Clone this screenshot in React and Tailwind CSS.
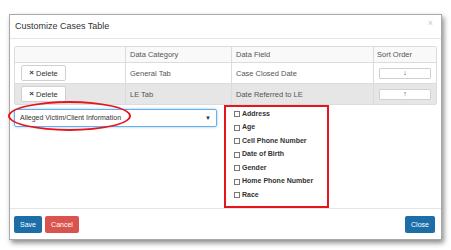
import { useState } from "react";

const rows = [
  { category: "General Tab", field: "Case Closed Date", arrow: "↓", shade: false },
  { category: "LE Tab", field: "Date Referred to LE", arrow: "↑", shade: true },
];

const fields = [
  "Address",
  "Age",
  "Cell Phone Number",
  "Date of Birth",
  "Gender",
  "Home Phone Number",
  "Race",
];

export default function App() {
  const [section, setSection] = useState("Alleged Victim/Client Information");

  return (
    <div
      className="w-[451px] h-[250px] bg-white overflow-hidden pt-[14px] pl-[9px]"
      style={{ fontFamily: '"Liberation Sans", Arial, sans-serif' }}
    >
      <div className="w-[433px] h-[226px] border border-[#a9a9a9] bg-white shadow-[2px_3px_5px_rgba(0,0,0,0.45)] flex flex-col">
        {/* header */}
        <div className="h-[25px] border-b border-[#e5e5e5] flex items-center justify-between pl-[5px] pr-[8px]">
          <span className="text-[9px] text-[#333]">Customize Cases Table</span>
          <span className="text-[9px] text-[#c8c8c8] -mt-[5px]">×</span>
        </div>

        {/* body */}
        <div className="flex-1 pt-[7px] pl-[4px] pr-[6px] flex flex-col">
          <table className="w-[421px] border-separate border-spacing-0 border border-[#dcdcdc] rounded-[2px] text-[7.5px] text-[#555] table-fixed">
            <colgroup>
              <col className="w-[110px]" />
              <col className="w-[106px]" />
              <col className="w-[142px]" />
              <col className="w-[63px]" />
            </colgroup>
            <thead>
              <tr className="h-[15px] bg-[#f9f9f9]">
                <th className="font-normal text-left"></th>
                <th className="font-normal text-left pl-[4px] border-l border-[#dcdcdc]">Data Category</th>
                <th className="font-normal text-left pl-[4px] border-l border-[#dcdcdc]">Data Field</th>
                <th className="font-normal text-left pl-[3px] border-l border-[#dcdcdc]">Sort Order</th>
              </tr>
            </thead>
            <tbody>
              {rows.map((row) => (
                <tr key={row.field} className={row.shade ? "h-[21px] bg-[#e6e6e6]" : "h-[21px] bg-white"}>
                  <td className="border-t border-[#dcdcdc] pl-[6px]">
                    <button className="w-[45px] h-[16px] bg-white border border-[#d0d0d0] rounded-[2px] text-[7.5px] text-[#333] flex items-center justify-center gap-[2px]">
                      <span className="font-bold text-[8px]">×</span>Delete
                    </button>
                  </td>
                  <td className="border-t border-l border-[#dcdcdc] pl-[4px]">{row.category}</td>
                  <td className="border-t border-l border-[#dcdcdc] pl-[4px]">{row.field}</td>
                  <td className="border-t border-l border-[#dcdcdc] pl-[5px]">
                    <div className="w-[52px] h-[11px] bg-white border border-[#d0d0d0] rounded-[1px] flex items-center justify-center text-[7px] text-[#333]">
                      {row.arrow}
                    </div>
                  </td>
                </tr>
              ))}
            </tbody>
          </table>

          <div className="flex">
            <div className="relative w-[203px] mt-[4px]">
              <div className="h-[18px] border border-[#66afe9] rounded-[2px] shadow-[0_0_3px_rgba(102,175,233,0.7)] flex items-center justify-between pl-[5px] pr-[5px] text-[7px] text-[#333]">
                <span>{section}</span>
                <span className="text-[6px]" onClick={() => setSection(section)}>▼</span>
              </div>
              <div className="absolute left-[-6px] top-[-8px] w-[123px] h-[30px] rounded-[50%] border-2 border-[#e8141b]"></div>
            </div>

            <div className="ml-[7px] w-[105px] h-[103px] border-2 border-[#e8141b] pl-[8px] pt-0 flex flex-col">
              {fields.map((f) => (
                <div key={f} className="h-[13.5px] flex items-center gap-[2px] text-[7px] font-bold text-[#333]">
                  <span className="w-[6px] h-[6px] border border-[#777] bg-white shrink-0"></span>
                  {f}
                </div>
              ))}
            </div>
          </div>
        </div>

        {/* footer */}
        <div className="h-[31px] border-t border-[#e5e5e5] flex items-start justify-between pt-[7px] pl-[4px] pr-[6px]">
          <div className="flex gap-[3px]">
            <button className="w-[28px] h-[17px] bg-[#1b6ea8] rounded-[2px] text-white text-[7px]">Save</button>
            <button className="w-[34px] h-[17px] bg-[#d9534f] rounded-[2px] text-white text-[7px]">Cancel</button>
          </div>
          <button className="w-[30px] h-[17px] bg-[#1b6ea8] rounded-[2px] text-white text-[7px]">Close</button>
        </div>
      </div>
    </div>
  );
}
